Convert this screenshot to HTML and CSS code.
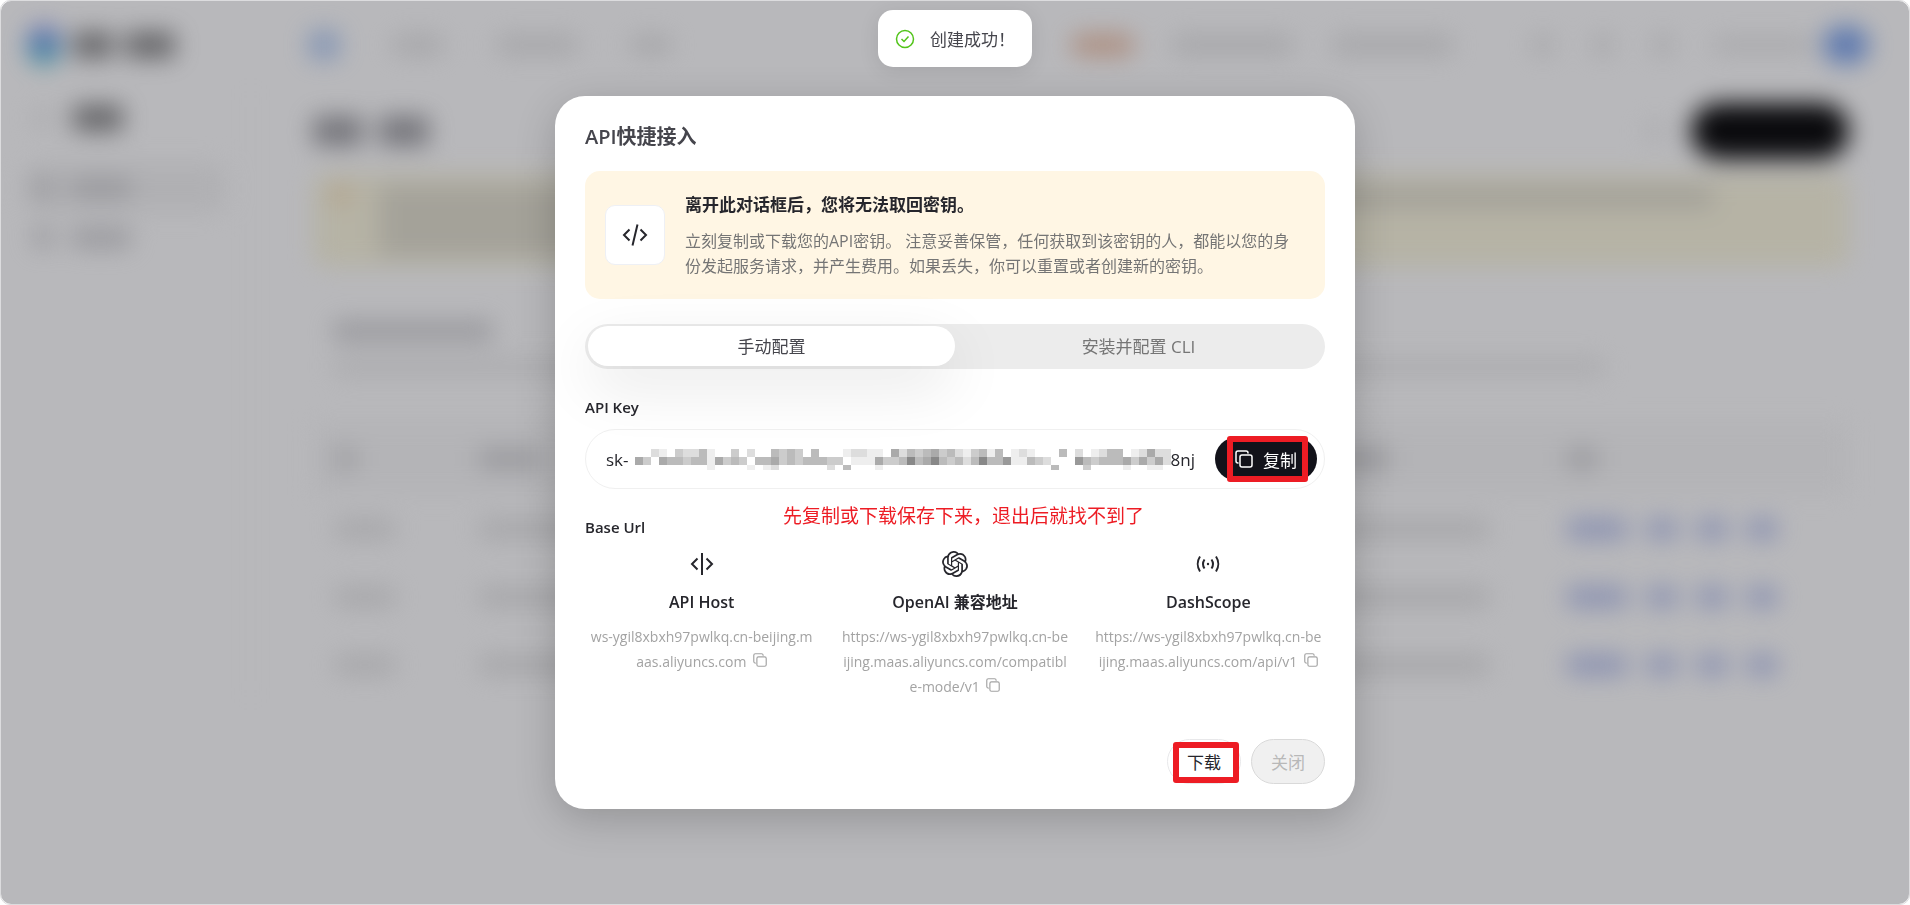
FILE: index.html
```html
<!DOCTYPE html>
<html lang="zh-CN">

<head>
    <meta charset="UTF-8">
    <meta name="viewport" content="width=device-width, initial-scale=1.0">
    <title>API Key</title>
    <link rel="stylesheet" href="styles.css">
</head>

<body>
    <svg class="sprite" aria-hidden="true">
        <symbol id="icon-copy" viewBox="0 0 18 18">
            <g fill="none" stroke="currentColor" stroke-linejoin="round" stroke-linecap="round">
                <rect x="5" y="5" width="12" height="12" rx="2" />
                <path d="M3 13a2 2 0 0 1-2-2V3a2 2 0 0 1 2-2h8a2 2 0 0 1 2 2" />
            </g>
        </symbol>
    </svg>

    <!-- Console page, blurred behind the dialog -->
    <div class="screen">
        <div class="page" aria-hidden="true">
            <div class="topbar">
                <div class="brand">
                    <i class="logo"></i>
                    <i class="bar dark w40"></i>
                    <i class="bar dark w50"></i>
                </div>
                <div class="nav">
                    <i class="bar blue w30"></i>
                    <i class="bar w50"></i>
                    <i class="bar w80"></i>
                    <i class="bar w40"></i>
                </div>
                <div class="tools">
                    <i class="bar orange w60"></i>
                    <i class="bar w120"></i>
                    <i class="bar w120"></i>
                    <i class="bar w20 gap-before"></i>
                    <i class="bar w20"></i>
                    <i class="bar w20"></i>
                    <i class="bar thin w100"></i>
                    <i class="avatar"></i>
                </div>
            </div>

            <div class="body">
                <div class="sidebar">
                    <div class="side-item"><i class="bar pale w20"></i><i class="bar dark w50"></i></div>
                    <div class="side-item active"><i class="bar text w20"></i><i class="bar text w60"></i></div>
                    <div class="side-item"><i class="bar text w20"></i><i class="bar text w60"></i></div>
                </div>

                <div class="main">
                    <div class="heading">
                        <i class="bar title w50"></i>
                        <i class="bar title w50"></i>
                        <i class="bar pale w20 push"></i>
                        <i class="create"></i>
                    </div>
                    <div class="notice">
                        <i class="dot"></i>
                        <div class="notice-text">
                            <i class="bar olive long"></i>
                            <i class="bar olive half"></i>
                            <i class="bar olive half"></i>
                        </div>
                    </div>
                    <div class="section">
                        <i class="bar text w160"></i>
                        <i class="bar pale sub"></i>
                    </div>
                    <div class="grid grid-head">
                        <i class="bar text w20"></i><i class="bar text w60"></i><i class="bar text w60"></i><i class="bar text w30"></i>
                    </div>
                    <div class="grid">
                        <i class="bar w60"></i><i class="bar w120"></i><i class="bar w160"></i>
                        <span class="actions"><i class="bar link w60"></i><i class="bar link w30"></i><i class="bar link w30"></i><i class="bar link w30"></i></span>
                    </div>
                    <div class="grid">
                        <i class="bar w60"></i><i class="bar w120"></i><i class="bar w160"></i>
                        <span class="actions"><i class="bar link w60"></i><i class="bar link w30"></i><i class="bar link w30"></i><i class="bar link w30"></i></span>
                    </div>
                    <div class="grid">
                        <i class="bar w60"></i><i class="bar w120"></i><i class="bar w160"></i>
                        <span class="actions"><i class="bar link w60"></i><i class="bar link w30"></i><i class="bar link w30"></i><i class="bar link w30"></i></span>
                    </div>
                </div>
            </div>
        </div>
    </div>

    <div class="toast" role="status">
        <svg width="20" height="20" viewBox="0 0 20 20" fill="none" stroke="#52c41a" stroke-width="1.5">
            <circle cx="10" cy="10" r="8.5" />
            <path d="M6.5 10l2.5 2.5 4.5-5" />
        </svg>
        <span>创建成功！</span>
    </div>

    <div class="overlay">
        <div class="modal" role="dialog" aria-labelledby="modalTitle">
            <h2 class="modal-title" id="modalTitle">API快捷接入</h2>

            <div class="alert">
                <div class="alert-icon">
                    <svg width="26" height="26" viewBox="0 0 26 26" fill="none" stroke="currentColor" stroke-width="2">
                        <path d="M7.5 7.500L2 13l5.500 5.500M18.500 7.500L24 13l-5.500 5.500M15.500 2.500l-5 21" />
                    </svg>
                </div>
                <div class="alert-text">
                    <h3>离开此对话框后，您将无法取回密钥。</h3>
                    <p>立刻复制或下载您的API密钥。 注意妥善保管，任何获取到该密钥的人，都能以您的身份发起服务请求，并产生费用。如果丢失，你可以重置或者创建新的密钥。</p>
                </div>
            </div>

            <div class="tabs" role="tablist">
                <button class="tab selected" role="tab" aria-selected="true">手动配置</button>
                <button class="tab" role="tab" aria-selected="false">安装并配置 CLI</button>
            </div>

            <h4 class="label">API Key</h4>
            <div class="key-field">
                <span>sk-</span>
                <svg class="mosaic" id="mosaic" width="536" height="24" shape-rendering="crispEdges"></svg>
                <span class="key-end">8nj</span>
                <button class="copy-button marked">
                    <svg width="18" height="18" stroke-width="1.5"><use href="#icon-copy" /></svg>
                    复制
                </button>
            </div>

            <div class="base-row">
                <h4 class="label">Base Url</h4>
                <p class="note">先复制或下载保存下来，退出后就找不到了</p>
            </div>
            <div class="hosts">
                <div class="host">
                    <svg width="26" height="26" viewBox="0 0 26 26" fill="none" stroke="currentColor" stroke-width="2">
                        <path d="M8.500 7.500L3 13l5.500 5.500M17.500 7.500L23 13l-5.500 5.500M13 2v22" />
                    </svg>
                    <h5>API Host</h5>
                    <p>ws-ygil8xbxh97pwlkq.cn-beijing.m<br>aas.aliyuncs.com <button class="mini-copy" aria-label="复制 API Host"><svg width="14" height="14" stroke-width="1.5"><use href="#icon-copy" /></svg></button></p>
                </div>
                <div class="host">
                    <svg width="26" height="26" viewBox="0 0 24 24" fill="currentColor">
                        <path d="M22.2819 9.8211a5.9847 5.9847 0 0 0-.5157-4.9108 6.0462 6.0462 0 0 0-6.5098-2.9A6.0651 6.0651 0 0 0 4.9807 4.1818a5.9847 5.9847 0 0 0-3.9977 2.9 6.0462 6.0462 0 0 0 .7427 7.0966 5.98 5.98 0 0 0 .511 4.9107 6.051 6.051 0 0 0 6.5146 2.9001A5.9847 5.9847 0 0 0 13.2599 24a6.0557 6.0557 0 0 0 5.7718-4.2058 5.9894 5.9894 0 0 0 3.9977-2.9001 6.0557 6.0557 0 0 0-.7475-7.073zm-9.022 12.6081a4.4755 4.4755 0 0 1-2.8764-1.0408l.1419-.0804 4.7783-2.7582a.7948.7948 0 0 0 .3927-.6813v-6.7369l2.02 1.1686a.071.071 0 0 1 .038.052v5.5826a4.504 4.504 0 0 1-4.4945 4.4944zm-9.6607-4.1254a4.4708 4.4708 0 0 1-.5346-3.0137l.142.0852 4.783 2.7582a.7712.7712 0 0 0 .7806 0l5.8428-3.3685v2.3324a.0804.0804 0 0 1-.0332.0615L9.74 19.9502a4.4992 4.4992 0 0 1-6.1408-1.6464zM2.3408 7.8956a4.485 4.485 0 0 1 2.3655-1.9728V11.6a.7664.7664 0 0 0 .3879.6765l5.8144 3.3543-2.0201 1.1685a.0757.0757 0 0 1-.071 0l-4.8303-2.7865A4.504 4.504 0 0 1 2.3408 7.872zm16.5963 3.8558L13.1038 8.364 15.1192 7.2a.0757.0757 0 0 1 .071 0l4.8303 2.7913a4.4944 4.4944 0 0 1-.6765 8.1042v-5.6772a.79.79 0 0 0-.407-.667zm2.0107-3.0231l-.142-.0852-4.7735-2.7818a.7759.7759 0 0 0-.7854 0L9.409 9.2297V6.8974a.0662.0662 0 0 1 .0284-.0615l4.8303-2.7866a4.4992 4.4992 0 0 1 6.6802 4.66zM8.3065 12.863l-2.02-1.1638a.0804.0804 0 0 1-.038-.0567V6.0742a4.4992 4.4992 0 0 1 7.3757-3.4537l-.142.0805L8.704 5.459a.7948.7948 0 0 0-.3927.6813zm1.0976-2.3654l2.602-1.4998 2.6069 1.4998v2.9994l-2.5974 1.4997-2.6067-1.4997Z" />
                    </svg>
                    <h5>OpenAI 兼容地址</h5>
                    <p>https://ws-ygil8xbxh97pwlkq.cn-be<br>ijing.maas.aliyuncs.com/compatibl<br>e-mode/v1 <button class="mini-copy" aria-label="复制 OpenAI 兼容地址"><svg width="14" height="14" stroke-width="1.5"><use href="#icon-copy" /></svg></button></p>
                </div>
                <div class="host">
                    <svg width="26" height="26" viewBox="0 0 26 26" fill="none" stroke="currentColor" stroke-width="2">
                        <path d="M5 5.500c-3 4.500-3 10.500 0 15M21 5.500c3 4.500 3 10.500 0 15M9.500 8.500c-2 3-2 6 0 9M16.500 8.500c2 3 2 6 0 9" />
                        <circle cx="13" cy="13" r="1.2" fill="currentColor" stroke="none" />
                    </svg>
                    <h5>DashScope</h5>
                    <p>https://ws-ygil8xbxh97pwlkq.cn-be<br>ijing.maas.aliyuncs.com/api/v1 <button class="mini-copy" aria-label="复制 DashScope"><svg width="14" height="14" stroke-width="1.5"><use href="#icon-copy" /></svg></button></p>
                </div>
            </div>

            <div class="footer">
                <button class="pill-button marked">下载</button>
                <button class="pill-button" disabled>关闭</button>
            </div>
        </div>
    </div>

    <script>
        // Mosaic over the secret part of the key: one hex digit is one grey block
        const rows = [
            '..de.cddbe..cfd..bcbc.b.ffeddee.adbcbacbdecbeb.ede...b.d.edbb.edadd',
            'ac.abbcbbeacbcfbbacbcbbbccfeeeaccb8ba8bcbdb8bb9eebcd...9bcbbbacacad',
            '.........e....e.ed......d.b...e.....................b...c....e..ee.'
        ];
        const mosaic = document.getElementById('mosaic');

        rows.forEach((row, y) => {
            [...row].forEach((level, x) => {
                if (level === '.') return;
                const block = document.createElementNS('http://www.w3.org/2000/svg', 'rect');
                block.setAttribute('x', x * 8);
                block.setAttribute('y', y * 8);
                block.setAttribute('width', 8);
                block.setAttribute('height', y === 2 ? 5 : 8);
                block.setAttribute('fill', '#' + level.repeat(3));
                mosaic.appendChild(block);
            });
        });
    </script>
</body>

</html>
```
FILE: styles.css
```css
:root {
    --ink: #26262c;
    --muted: #757575;
    --light: #a3a3a3;
    --line: #f0f0f0;
    --mark: #ed1c24;
}

* {
    box-sizing: border-box;
}

body {
    margin: 0;
    background-color: white;
    color: var(--ink);
    font-family: 'Open Sans', 'Noto Sans CJK SC', sans-serif;
    font-size: 17px;
}

h2, h3, h4, h5, p {
    margin: 0;
}

button {
    font-family: inherit;
    font-size: 17px;
    cursor: pointer;
}

.sprite {
    display: none;
}

/* blurred page */
.screen {
    position: fixed;
    inset: 0;
    overflow: hidden;
    border: 1px solid #dcdcde;
    border-radius: 10px;
}

.page {
    min-height: 100%;
    filter: blur(12px);
}

.bar {
    display: block;
    flex: none;
    height: 20px;
    border-radius: 4px;
    background-color: #e6e6e6;
}

.bar.text { background-color: #d2d2d4; }

.bar.dark {
    height: 26px;
    background-color: #888;
}

.bar.title {
    height: 30px;
    background-color: #a0a0a4;
}

.bar.pale { background-color: #efefef; }
.bar.blue { height: 28px; background-color: #b4cdf5; }
.bar.link { background-color: #bcc6f0; }
.bar.orange { background-color: #eebfa4; }
.bar.olive { background-color: #dedbcc; }
.bar.thin { height: 14px; }

.w20 { width: 20px; }
.w30 { width: 30px; }
.w40 { width: 40px; }
.w50 { width: 50px; }
.w60 { width: 60px; }
.w80 { width: 80px; }
.w100 { width: 100px; }
.w120 { width: 120px; }
.w160 { width: 160px; }

.topbar {
    display: flex;
    align-items: center;
    height: 88px;
    padding: 0 40px 0 26px;
}

.brand {
    display: flex;
    align-items: center;
    gap: 12px;
    width: 282px;
}

.logo {
    width: 34px;
    height: 40px;
    border-radius: 50%;
    background: linear-gradient(#a090f0, #60a8e8, #50c8c8);
}

.nav {
    display: flex;
    align-items: center;
    gap: 54px;
}

.tools {
    display: flex;
    align-items: center;
    gap: 40px;
    margin-left: auto;
}

.gap-before {
    margin-left: 40px;
}

.avatar {
    width: 46px;
    height: 38px;
    margin-left: -30px;
    border-radius: 19px;
    background-color: #7fa6ee;
}

.body {
    display: flex;
}

.sidebar {
    width: 250px;
    padding: 4px 24px;
    border-right: 1px solid #eee;
}

.side-item {
    display: flex;
    align-items: center;
    gap: 18px;
    height: 50px;
    padding: 0 8px;
    border-radius: 12px;
}

.side-item:first-child {
    gap: 20px;
    margin-bottom: 20px;
}

.side-item.active {
    background-color: #f4f4f4;
}

.main {
    flex: 1;
    padding: 0 60px 0 62px;
}

.heading {
    display: flex;
    align-items: center;
    gap: 16px;
    height: 84px;
}

.push {
    margin-left: auto;
}

.create {
    width: 158px;
    height: 56px;
    margin-left: 10px;
    border-radius: 28px;
    background-color: #060606;
}

.notice {
    display: flex;
    gap: 30px;
    height: 94px;
    padding: 14px 20px;
    border-radius: 12px;
    background-color: #fcf8e0;
}

.dot {
    width: 16px;
    height: 16px;
    border-radius: 50%;
    background-color: #f5d0a0;
}

.notice-text {
    flex: 1;
}

.notice-text .bar {
    margin-bottom: 4px;
}

.long { width: 92%; }
.half { width: 48%; }

.section {
    height: 156px;
    padding: 54px 20px 0;
}

.section .bar {
    margin-bottom: 16px;
}

.sub {
    width: 85%;
}

.grid {
    display: grid;
    grid-template-columns: 144px 850px 238px 1fr;
    align-items: center;
    height: 68px;
    padding: 0 20px 0 22px;
}

.grid-head {
    height: 72px;
    background-color: #f9f9f9;
}

.actions {
    display: flex;
    gap: 20px;
}

/* toast */
.toast {
    position: fixed;
    top: 10px;
    left: 50%;
    z-index: 3;
    transform: translateX(-50%);
    display: flex;
    align-items: center;
    gap: 15px;
    height: 57px;
    padding: 0 17px;
    border-radius: 15px;
    background-color: white;
    box-shadow: 0 4px 20px rgba(0, 0, 0, 0.1);
    color: #45454c;
    white-space: nowrap;
}

/* dialog */
.overlay {
    position: fixed;
    inset: 1px;
    z-index: 2;
    padding: 95px 20px 20px;
    overflow: auto;
    border-radius: 10px;
    background-color: rgba(20, 20, 30, 0.3);
}

.modal {
    width: 100%;
    max-width: 800px;
    margin: 0 auto;
    padding: 25px 30px;
    border-radius: 30px;
    background-color: white;
    box-shadow: 0 10px 40px rgba(0, 0, 0, 0.2);
}

.modal-title {
    margin-bottom: 18px;
    color: #45454c;
    font-size: 20px;
    font-weight: 600;
    line-height: 32px;
}

.alert {
    display: flex;
    align-items: center;
    gap: 20px;
    padding: 20px;
    border-radius: 15px;
    background-color: #fff6e4;
}

.alert-icon {
    display: flex;
    flex: none;
    align-items: center;
    justify-content: center;
    width: 60px;
    height: 60px;
    border: 1px solid #eef0f5;
    border-radius: 10px;
    background-color: white;
}

.alert-text h3 {
    margin-bottom: 10px;
    font-size: 17px;
    font-weight: 600;
    line-height: 28px;
}

.alert-text p {
    padding-right: 6px;
    color: var(--muted);
    font-size: 16px;
    line-height: 25px;
}

.tabs {
    display: flex;
    height: 45px;
    margin: 25px 0 26px;
    padding: 2px 3px 3px;
    border-radius: 23px;
    background-color: #ececec;
}

.tab {
    flex: 1;
    padding: 0 0 2px;
    border: none;
    border-radius: 20px;
    background: none;
    color: var(--muted);
}

.tab.selected {
    background-color: white;
    box-shadow: 0 20px 60px rgba(0, 0, 0, 0.1);
    color: #45454c;
}

.label {
    font-size: 15px;
    font-weight: 600;
    line-height: 24px;
}

.key-field {
    display: flex;
    align-items: center;
    height: 60px;
    margin: 10px 0 26px;
    padding: 0 7px 0 20px;
    border: 1px solid var(--line);
    border-radius: 30px;
    font-size: 17px;
}

.mosaic {
    flex: none;
    margin: 4px 0 0 6px;
}

.key-end {
    margin-right: auto;
}

.copy-button {
    display: flex;
    align-items: center;
    justify-content: center;
    gap: 10px;
    width: 102px;
    height: 44px;
    padding: 0;
    border: none;
    border-radius: 22px;
    background-color: #12121a;
    color: white;
}

/* red frame drawn over a button */
.marked {
    position: relative;
}

.marked::after {
    content: '';
    position: absolute;
    inset: -1px 9px -1px 12px;
    border: 6px solid var(--mark);
    border-radius: 3px;
}

.base-row {
    position: relative;
}

.note {
    position: absolute;
    top: -12px;
    left: 198px;
    color: var(--mark);
    font-size: 19px;
    line-height: 26px;
    white-space: nowrap;
}

.hosts {
    display: grid;
    grid-template-columns: repeat(3, 1fr);
    gap: 20px;
    margin-top: 12px;
    text-align: center;
}

.host > svg {
    display: block;
    margin: 0 auto 13px;
}

.host h5 {
    margin-bottom: 10px;
    font-size: 16px;
    font-weight: 600;
    line-height: 24px;
}

.host p {
    color: var(--light);
    font-size: 14px;
    line-height: 25px;
    white-space: nowrap;
}

.mini-copy {
    margin-left: 3px;
    padding: 0;
    border: none;
    background: none;
    color: inherit;
    line-height: 14px;
}

.footer {
    display: flex;
    justify-content: flex-end;
    gap: 10px;
    margin-top: 40px;
}

.pill-button {
    width: 74px;
    height: 45px;
    padding: 0;
    border: 1px solid #e8e8ea;
    border-radius: 23px;
    background-color: white;
    color: var(--ink);
}

.pill-button.marked::after {
    inset: 2px 1px 0 5px;
}

.pill-button:disabled {
    border-color: #d9d9d9;
    background-color: #f0f0f0;
    color: #b8b8b8;
    cursor: default;
}
```
